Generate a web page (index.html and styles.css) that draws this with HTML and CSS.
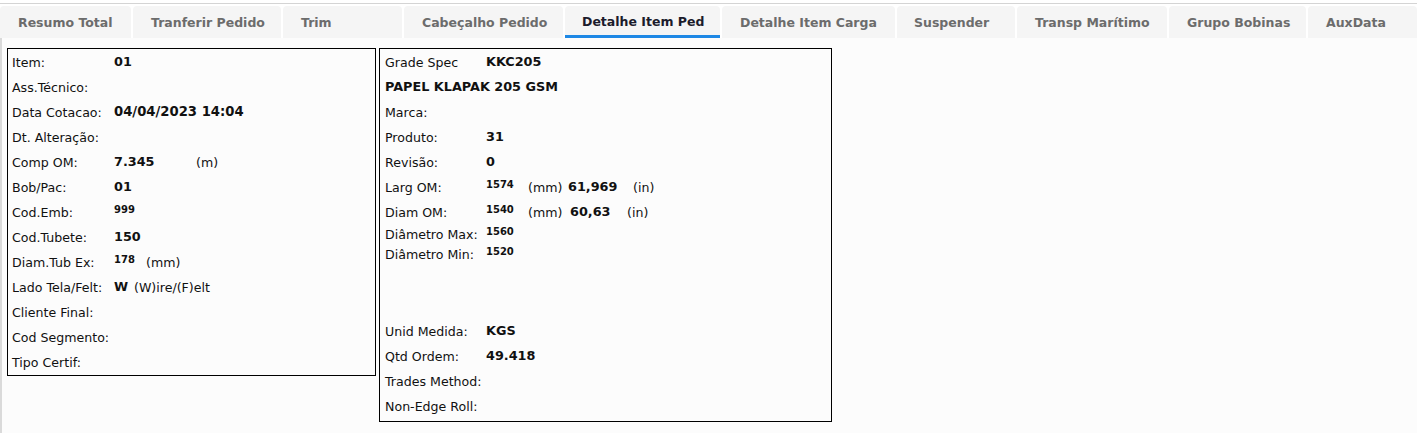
FILE: index.html
```html
<!DOCTYPE html>
<html lang="pt">
<head>
<meta charset="utf-8">
<title>Detalhe Item Ped</title>
<link rel="stylesheet" href="styles.css">
</head>
<body>
<div class="topbar">
  <nav class="tabs">
    <div class="tab t-resumo">Resumo Total</div>
    <div class="tab t-transf">Tranferir Pedido</div>
    <div class="tab t-trim">Trim</div>
    <div class="tab t-cab">Cabeçalho Pedido</div>
    <div class="tab t-ped active">Detalhe Item Ped</div>
    <div class="tab t-carga">Detalhe Item Carga</div>
    <div class="tab t-susp">Suspender</div>
    <div class="tab t-transp">Transp Marítimo</div>
    <div class="tab t-grupo">Grupo Bobinas</div>
    <div class="tab last">AuxData</div>
  </nav>
</div>
<main class="content">
  <section class="panel panel-left">
    <div class="row"><span class="lbl">Item:</span><span class="val">01</span></div>
    <div class="row"><span class="lbl">Ass.Técnico:</span></div>
    <div class="row"><span class="lbl">Data Cotacao:</span><span class="val date">04/04/2023 14:04</span></div>
    <div class="row"><span class="lbl">Dt. Alteração:</span></div>
    <div class="row"><span class="lbl">Comp OM:</span><span class="val w82">7.345</span><span class="unit">(m)</span></div>
    <div class="row"><span class="lbl">Bob/Pac:</span><span class="val">01</span></div>
    <div class="row"><span class="lbl">Cod.Emb:</span><span class="val small">999</span></div>
    <div class="row"><span class="lbl">Cod.Tubete:</span><span class="val">150</span></div>
    <div class="row"><span class="lbl">Diam.Tub Ex:</span><span class="val small w32">178</span><span class="unit">(mm)</span></div>
    <div class="row"><span class="lbl">Lado Tela/Felt:</span><span class="val w20">W</span><span class="unit">(W)ire/(F)elt</span></div>
    <div class="row"><span class="lbl">Cliente Final:</span></div>
    <div class="row"><span class="lbl">Cod Segmento:</span></div>
    <div class="row"><span class="lbl">Tipo Certif:</span></div>
  </section>
  <section class="panel panel-right">
    <div class="row"><span class="lbl">Grade Spec</span><span class="val">KKC205</span></div>
    <div class="row"><span class="val">PAPEL KLAPAK 205 GSM</span></div>
    <div class="row"><span class="lbl">Marca:</span></div>
    <div class="row"><span class="lbl">Produto:</span><span class="val">31</span></div>
    <div class="row"><span class="lbl">Revisão:</span><span class="val">0</span></div>
    <div class="row"><span class="lbl">Larg OM:</span><span class="val small w42">1574</span><span class="unit w40">(mm)</span><span class="val w65">61,969</span><span class="unit">(in)</span></div>
    <div class="row"><span class="lbl">Diam OM:</span><span class="val small w42">1540</span><span class="unit w42">(mm)</span><span class="val w57">60,63</span><span class="unit">(in)</span></div>
    <div class="row row-short"><span class="lbl">Diâmetro Max:</span><span class="val small">1560</span></div>
    <div class="row row-short"><span class="lbl">Diâmetro Min:</span><span class="val small">1520</span></div>
    <div class="spacer"></div>
    <div class="row"><span class="lbl">Unid Medida:</span><span class="val">KGS</span></div>
    <div class="row"><span class="lbl">Qtd Ordem:</span><span class="val">49.418</span></div>
    <div class="row"><span class="lbl">Trades Method:</span></div>
    <div class="row"><span class="lbl">Non-Edge Roll:</span></div>
  </section>
</main>
</body>
</html>
```
FILE: styles.css
```css
* { box-sizing: border-box; }
html, body {
  margin: 0;
  padding: 0;
  background: #fcfcfc;
  font-family: "DejaVu Sans", Verdana, sans-serif;
  color: #111;
}
.topbar {
  background: #ffffff;
  padding-top: 3px;
}
.tabs {
  display: flex;
  gap: 2px;
  border-top: 1px solid #d4d4d4;
  padding-top: 2px;
  background: #ffffff;
  overflow: hidden;
}
.tab {
  flex: 0 0 auto;
  height: 32px;
  padding: 0 0 0 18px;
  display: flex;
  align-items: center;
  background: #f5f5f5;
  border-radius: 4px 4px 0 0;
  font-weight: bold;
  font-size: 12.5px;
  color: #6c6c6c;
  white-space: nowrap;
}
.t-resumo { width: 131px; }
.t-transf { width: 148px; }
.t-trim { width: 119px; }
.t-cab { width: 159px; }
.t-ped { width: 155px; padding-left: 17px; }
.t-carga { width: 173px; }
.t-susp { width: 118px; padding-left: 17px; }
.t-transp { width: 150px; }
.t-grupo { width: 137px; }
.tab.active {
  color: #1c1c2c;
  border-bottom: 3px solid #1e88e5;
  padding-top: 2px;
}
.tab.last { flex: 1 1 auto; min-width: 0; }
.content {
  display: flex;
  align-items: flex-start;
  gap: 3px;
  border-left: 2px solid #dadada;
  padding: 10px 0 0 5px;
  min-height: 400px;
}
.panel {
  border: 1px solid #000;
  background: #fcfcfc;
  padding: 1px 0 0 4px;
}
.panel-left { width: 369px; }
.panel-right { width: 453px; padding-left: 5px; padding-bottom: 2px; }
.row {
  height: 25px;
  line-height: 25px;
  font-size: 12.6px;
  white-space: nowrap;
}
.row-short {
  height: 20px;
  line-height: 20px;
}
.spacer { height: 54px; }
.lbl {
  display: inline-block;
  width: 102px;
}
.panel-right .lbl { width: 101px; }
.val {
  display: inline-block;
  font-weight: bold;
  font-size: 12.8px;
  line-height: 14px;
  vertical-align: 1px;
}
.val.date { font-size: 13.2px; }
.val.small {
  font-size: 10px;
  line-height: 11px;
  vertical-align: 4px;
}
.unit { display: inline-block; }
.w20 { width: 20px; }
.w32 { width: 32px; }
.w40 { width: 40px; }
.w42 { width: 42px; }
.w57 { width: 57px; }
.w65 { width: 65px; }
.w82 { width: 82px; }
```
